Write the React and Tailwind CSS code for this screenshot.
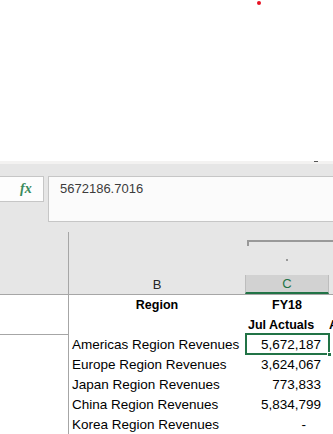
import React from 'react';

const rows = [
  { name: 'Americas Region Revenues', value: '5,672,187', selected: true },
  { name: 'Europe Region Revenues', value: '3,624,067' },
  { name: 'Japan Region Revenues', value: '773,833' },
  { name: 'China Region Revenues', value: '5,834,799' },
  { name: 'Korea Region Revenues', value: '-' },
];

const App = () => {
  return (
    <div
      className="w-[333px] h-[434px] overflow-hidden bg-white text-black"
      style={{ fontFamily: '"Liberation Sans", Arial, sans-serif' }}
    >
      {/* top white area */}
      <div className="relative h-[161px] bg-white">
        <span className="absolute left-[257px] top-[1px] w-[4px] h-[4px] rounded-full bg-[#e81123]" />
      </div>
      <div className="relative h-[3px] bg-[#f3f2f1]">
        <span className="absolute left-[314px] top-0 w-[4px] h-[1px] bg-[#555]" />
      </div>

      {/* formula bar + column headers */}
      <div className="h-[130px] bg-[#e6e6e6] flex flex-col">
        <div className="flex items-start pt-[12px]">
          <div className="w-[44px] h-[26px] border border-l-0 border-[#c6c6c6] bg-[#fdfdfd] flex items-center pl-[20px]">
            <span
              className="text-[14px] italic font-bold text-[#3a8a5c] leading-none"
              style={{ fontFamily: '"Liberation Serif", "Times New Roman", serif' }}
            >
              fx
            </span>
          </div>
          <div className="ml-[4px] flex-1 h-[46px] border border-r-0 border-[#c6c6c6] bg-[#fbfbfb] pl-[11px] pt-[4px] text-[13px] leading-[16px] text-[#3c3c3c]">
            5672186.7016
          </div>
        </div>

        <div className="flex-1 flex">
          <div className="w-[68px]" />
          <div className="w-[177px] flex flex-col">
            <div className="h-[10px]" />
            <div className="flex-1 border-l border-[#a6a6a6] flex flex-col justify-end">
              <div className="h-[19px] flex items-center justify-center text-[13px] text-[#262626]">B</div>
            </div>
          </div>
          <div className="flex-1 flex flex-col">
            <div className="h-[18px]" />
            <div className="ml-[2px] h-[6px] border-t-2 border-l-2 border-[#999]" />
            <div className="ml-[41px] mt-[13px] w-[2px] h-[2px] bg-[#999]" />
            <div className="flex-1" />
            <div className="h-[19px] flex">
              <div className="w-[84px] bg-[#d2d2d2] border-x border-[#bdbdbd] border-b-2 border-b-[#217346] flex items-center justify-center text-[13px] text-[#217346]">
                C
              </div>
            </div>
          </div>
        </div>
      </div>

      {/* sheet grid */}
      <div className="border-t border-[#a6a6a6] grid grid-cols-[68px_177px_84px_1fr] auto-rows-[20px] text-[13.5px] leading-[20px]">
        <div />
        <div className="border-l border-[#a6a6a6] text-center font-bold text-[12.5px]">Region</div>
        <div className="text-center font-bold text-[12.5px]">FY18</div>
        <div />

        <div className="border-b border-[#a6a6a6]" />
        <div className="border-l border-[#a6a6a6]" />
        <div className="pl-[3px] font-bold text-[12.5px] whitespace-nowrap">Jul Actuals</div>
        <div className="font-bold text-[12.5px] overflow-hidden">A</div>

        {rows.map((r) => (
          <React.Fragment key={r.name}>
            <div />
            <div className="border-l border-[#a6a6a6] pl-[3px] whitespace-nowrap">{r.name}</div>
            <div className={`relative text-right ${r.value === '-' ? 'pr-[23px]' : 'pr-[8px]'}`}>
              {r.value}
              {r.selected && (
                <>
                  <span className="absolute left-0 top-[-2px] w-[85px] h-[22px] border-2 border-[#217346]" />
                  <span className="absolute left-[82px] top-[17px] w-[5px] h-[5px] bg-[#217346] border border-white" />
                </>
              )}
            </div>
            <div />
          </React.Fragment>
        ))}
      </div>
    </div>
  );
};

export default App;
